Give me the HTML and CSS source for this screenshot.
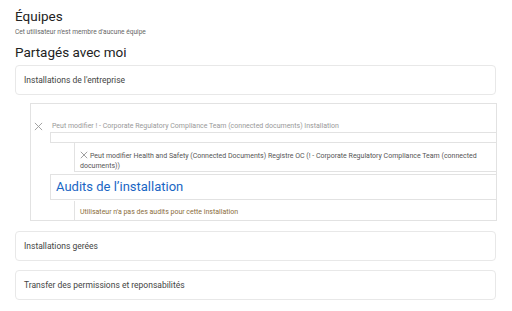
FILE: index.html
```html
<!DOCTYPE html>
<html lang="fr">

<head>
    <meta charset="UTF-8">
    <title>Permissions</title>
    <link rel="stylesheet" href="styles.css">
</head>

<body>
    <!-- Équipes -->
    <h2 class="section-title">Équipes</h2>
    <p class="muted">Cet utilisateur n'est membre d'aucune équipe</p>

    <!-- Partagés avec moi -->
    <h2 class="section-title">Partagés avec moi</h2>
    <div class="card">Installations de l'entreprise</div>

    <div class="panel">
        <div class="perm-row">
            <span class="x-icon">
                <svg width="9" height="9" viewBox="0 0 10 10"><path d="M1 1 L9 9 M9 1 L1 9" stroke="#999" stroke-width="1" fill="none"/></svg>
            </span>
            <span>Peut modifier ! - Corporate Regulatory Compliance Team (connected documents) Installation</span>
        </div>
        <div class="empty-box"></div>
        <div class="sub-box">
            <svg class="x-small" width="8" height="8" viewBox="0 0 10 10"><path d="M1 1 L9 9 M9 1 L1 9" stroke="#888" stroke-width="1" fill="none"/></svg>Peut modifier Health and Safety (Connected Documents) Registre OC (! - Corporate Regulatory Compliance Team (connected documents))
        </div>
        <div class="audits-box">Audits de l’installation</div>
        <div class="sub-box warn">Utilisateur n'a pas des audits pour cette installation</div>
    </div>

    <div class="card">Installations gerées</div>
    <div class="card">Transfer des permissions et reponsabilités</div>
</body>

</html>
```

FILE: styles.css
```css
body {
    font-family: Roboto, "Liberation Sans", sans-serif;
    margin: 0;
    padding: 8px 16px 0 15px;
    color: #333;
}

.section-title {
    font-size: 13.5px;
    font-weight: normal;
    line-height: 16px;
    margin: 0;
    color: #222;
}

.muted {
    font-size: 6.6px;
    color: #666;
    margin: 4px 0 8px;
    line-height: 8px;
}

.card {
    border: 1px solid #e8e8e8;
    border-radius: 4px;
    height: 28px;
    line-height: 28px;
    padding: 0 8px;
    font-size: 8.5px;
    color: #444;
    margin-top: 5px;
}

.card + .card {
    margin-top: 9px;
}

.panel {
    border: 1px solid #e2e2e2;
    margin: 8px -1px 10px 15px;
    padding: 16px 0 0 0;
}

.perm-row {
    display: flex;
    align-items: center;
    font-size: 7px;
    color: #999;
    line-height: 12px;
    padding-left: 3px;
}

.x-icon {
    width: 18px;
    display: flex;
}

.empty-box {
    margin-left: 19px;
    height: 9px;
    border: 1px solid #e2e2e2;
    border-right: none;
}

.sub-box {
    margin-left: 43px;
    border-left: 1px solid #e2e2e2;
    border-bottom: 1px solid #e2e2e2;
    font-size: 7px;
    line-height: 10px;
    color: #555;
    padding: 8px 6px 0 5px;
}

.x-small {
    margin-right: 2px;
    vertical-align: -1px;
}

.audits-box {
    margin: 2px 0 1px 19px;
    border: 1px solid #e2e2e2;
    border-right: none;
    font-size: 13px;
    line-height: 24px;
    color: #1a66c4;
    padding-left: 5px;
}

.sub-box.warn {
    color: #8a6d3b;
    border-bottom: none;
    padding: 6px 5px 3px;
}
```
